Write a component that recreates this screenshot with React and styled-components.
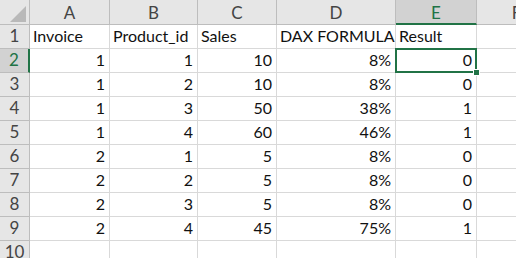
import React from 'react';
import styled, { createGlobalStyle, css } from 'styled-components';

const GREEN = '#217346';

const GlobalStyle = createGlobalStyle`
  html, body {
    margin: 0;
    padding: 0;
    background: #ffffff;
    overflow: hidden;
  }
`;

const Sheet = styled.div`
  display: grid;
  grid-template-columns: 30px 80px 88px 79px 119px 81px 80px;
  grid-template-rows: 25px repeat(10, 24px);
  width: 516px;
  height: 258px;
  overflow: hidden;
  font-family: Lato, "Liberation Sans", sans-serif;
  font-size: 16px;
  color: #111;
`;

const Corner = styled.div`
  position: relative;
  background: #e6e6e6;
  border-right: 1px solid #bdbdbd;
  border-bottom: 1px solid #bdbdbd;
  box-sizing: border-box;

  &::after {
    content: '';
    position: absolute;
    right: 3px;
    bottom: 2px;
    width: 0;
    height: 0;
    border-left: 16px solid transparent;
    border-bottom: 16px solid #b9b9b9;
  }
`;

const ColHead = styled.div`
  display: flex;
  align-items: center;
  justify-content: center;
  background: ${(p) => (p.$active ? '#d2d2d2' : '#e6e6e6')};
  color: ${(p) => (p.$active ? GREEN : '#444')};
  border-right: 1px solid #bdbdbd;
  border-bottom: ${(p) => (p.$active ? `2px solid ${GREEN}` : '1px solid #bdbdbd')};
  box-sizing: border-box;
  padding-top: 1px;
  font-size: 17px;
`;

const RowHead = styled.div`
  display: flex;
  align-items: flex-end;
  justify-content: center;
  background: ${(p) => (p.$active ? '#d2d2d2' : '#e6e6e6')};
  color: ${(p) => (p.$active ? GREEN : '#444')};
  border-right: ${(p) => (p.$active ? `2px solid ${GREEN}` : '1px solid #bdbdbd')};
  border-bottom: 1px solid #bdbdbd;
  box-sizing: border-box;
  line-height: 1;
  padding-bottom: 4px;
  font-size: 17px;
`;

const Cell = styled.div`
  position: relative;
  display: flex;
  align-items: flex-end;
  justify-content: ${(p) => (p.$num ? 'flex-end' : 'flex-start')};
  padding: 0 4px 4px 3px;
  border-right: 1px solid #d9d9d9;
  border-bottom: 1px solid #d9d9d9;
  box-sizing: border-box;
  white-space: nowrap;
  line-height: 1;

  ${(p) =>
    p.$selected &&
    css`
      &::before {
        content: '';
        position: absolute;
        left: -1px;
        top: -1px;
        right: -1px;
        bottom: -1px;
        border: 2px solid ${GREEN};
      }
      &::after {
        content: '';
        position: absolute;
        right: -4px;
        bottom: -4px;
        width: 5px;
        height: 5px;
        background: ${GREEN};
        border: 1px solid #fff;
        z-index: 1;
      }
    `}
`;

const columns = ['A', 'B', 'C', 'D', 'E', 'F'];
const header = ['Invoice', 'Product_id', 'Sales', 'DAX FORMULA', 'Result', ''];
const rows = [
  [1, 1, 10, '8%', 0],
  [1, 2, 10, '8%', 0],
  [1, 3, 50, '38%', 1],
  [1, 4, 60, '46%', 1],
  [2, 1, 5, '8%', 0],
  [2, 2, 5, '8%', 0],
  [2, 3, 5, '8%', 0],
  [2, 4, 45, '75%', 1],
];

export default function App() {
  return (
    <>
      <GlobalStyle />
      <Sheet>
        <Corner />
        {columns.map((c) => (
          <ColHead key={c} $active={c === 'E'}>
            {c}
          </ColHead>
        ))}

        <RowHead>1</RowHead>
        {header.map((h, i) => (
          <Cell key={i}>{h}</Cell>
        ))}

        {rows.map((r, ri) => (
          <React.Fragment key={ri}>
            <RowHead $active={ri === 0}>{ri + 2}</RowHead>
            {r.map((v, ci) => (
              <Cell key={ci} $num $selected={ri === 0 && ci === 4}>
                {v}
              </Cell>
            ))}
            <Cell />
          </React.Fragment>
        ))}

        <RowHead>10</RowHead>
        {columns.map((c) => (
          <Cell key={c} />
        ))}
      </Sheet>
    </>
  );
}
